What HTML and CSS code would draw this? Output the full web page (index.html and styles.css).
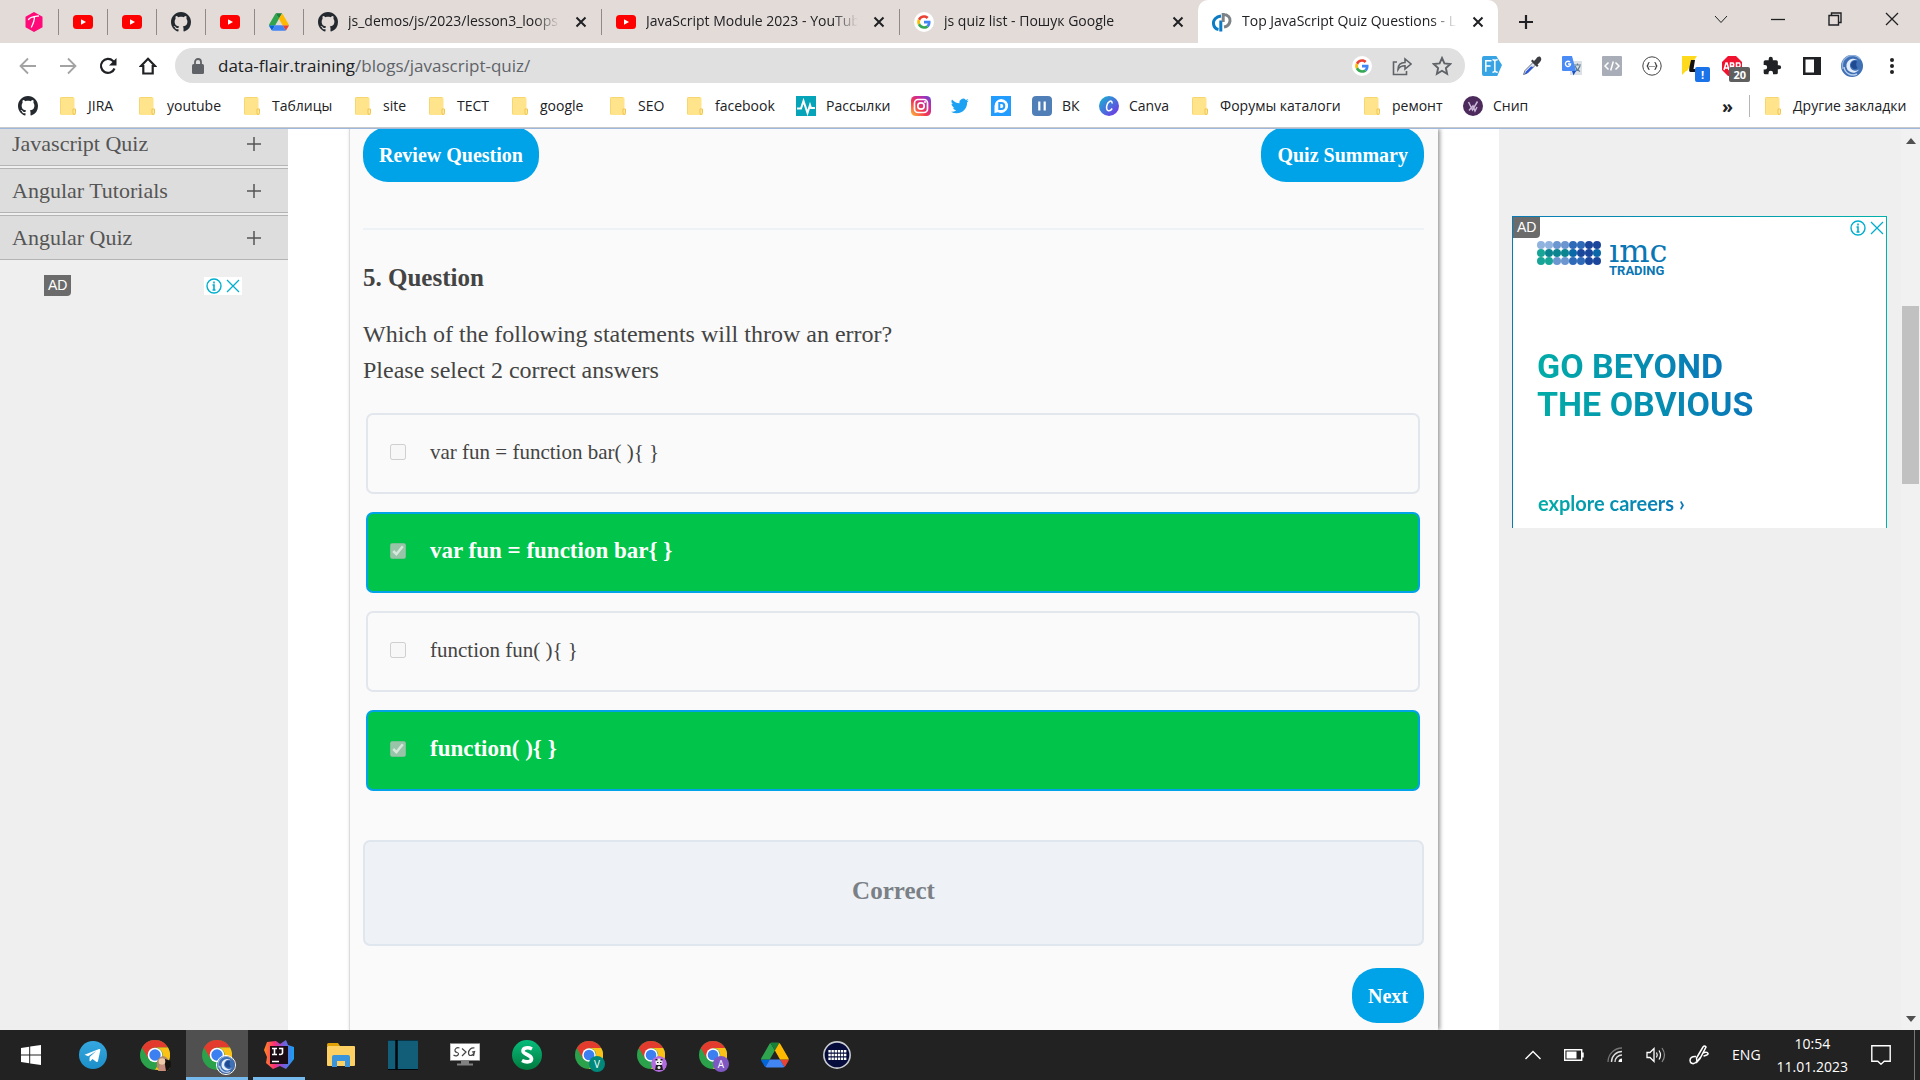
FILE: index.html
```html
<!DOCTYPE html>
<html lang="en">
<head>
<meta charset="utf-8">
<title>Top JavaScript Quiz Questions</title>
<link rel="stylesheet" href="styles.css">
</head>
<body>
<svg class="sprite" aria-hidden="true">
  <defs>
    <linearGradient id="g-insta" x1="0" y1="1" x2="1" y2="0"><stop offset="0" stop-color="#fdc33b"/><stop offset=".4" stop-color="#f3374f"/><stop offset=".7" stop-color="#c32aa3"/><stop offset="1" stop-color="#5a4bdc"/></linearGradient>
    <linearGradient id="g-canva" x1="0" y1="0" x2="1" y2="1"><stop offset="0" stop-color="#13b9cf"/><stop offset="1" stop-color="#7a2be8"/></linearGradient>
    <linearGradient id="g-ij" x1="0" y1="0" x2="1" y2="0"><stop offset="0" stop-color="#ff8a1f"/><stop offset=".35" stop-color="#fe2f77"/><stop offset=".6" stop-color="#8b4fd8"/><stop offset="1" stop-color="#12a5f4"/></linearGradient>
    <linearGradient id="g-s" x1="0" y1="0" x2="0" y2="1"><stop offset="0" stop-color="#06bd7d"/><stop offset="1" stop-color="#027a3d"/></linearGradient>
    <linearGradient id="g-tg" x1="0" y1="0" x2="0" y2="1"><stop offset="0" stop-color="#35a8e2"/><stop offset="1" stop-color="#1c8fc9"/></linearGradient>
  </defs>
  <symbol id="i-t" viewBox="0 0 20 20"><path fill="#ff0a78" d="M10 0l8.500 4.800v10.400L10 20l-8.500-4.800V4.800z"/><path d="M4.500 7.500c2.500-3 6-3 10-3.500M10.500 5c0 4-1.500 7-3 10" fill="none" stroke="#fff" stroke-width="1.300" stroke-linecap="round"/></symbol>
  <symbol id="i-yt" viewBox="0 0 20 20"><rect y="3" width="20" height="14" rx="3.500" fill="#f00"/><path d="M8 7.200v5.600L13 10z" fill="#fff"/></symbol>
  <symbol id="i-gh" viewBox="0 0 16 16"><path fill="#24292f" d="M8 0C3.580 0 0 3.580 0 8c0 3.540 2.290 6.530 5.470 7.590.4.070.55-.17.55-.38 0-.19-.01-.82-.01-1.490-2.010.37-2.530-.49-2.690-.94-.09-.23-.48-.94-.82-1.130-.28-.15-.68-.52-.01-.53.63-.01 1.080.58 1.230.82.72 1.210 1.870.87 2.330.66.070-.52.28-.87.51-1.070-1.780-.2-3.640-.89-3.640-3.950 0-.87.31-1.590.82-2.150-.08-.2-.36-1.020.08-2.120 0 0 .67-.21 2.200.82.64-.18 1.320-.27 2-.27s1.360.09 2 .27c1.530-1.040 2.200-.82 2.200-.82.44 1.100.16 1.920.08 2.120.51.56.82 1.270.82 2.150 0 3.070-1.870 3.750-3.650 3.950.29.25.54.73.54 1.480 0 1.070-.01 1.930-.01 2.200 0 .21.15.46.55.38A8.010 8.010 0 0016 8c0-4.420-3.580-8-8-8z"/></symbol>
  <symbol id="i-drive" viewBox="0 0 88 78"><path fill="#0066da" d="M6.600 66.850l3.850 6.650c.8 1.400 1.950 2.500 3.300 3.300L27.500 53H0c0 1.550.4 3.100 1.200 4.500z"/><path fill="#2fa44f" d="M43.650 25L29.900 1.200c-1.350.8-2.500 1.900-3.300 3.300L1.200 48.500A9 9 0 000 53h27.500z"/><path fill="#ea4335" d="M73.550 76.800c1.350-.8 2.500-1.900 3.300-3.300l9.250-16a9 9 0 001.200-4.500H59.800l5.850 11.500z"/><path fill="#188038" d="M43.650 25L57.400 1.200C56.050.4 54.500 0 52.900 0H34.400c-1.600 0-3.150.45-4.500 1.200z"/><path fill="#4285f4" d="M59.800 53H27.500L13.750 76.800c1.350.8 2.900 1.200 4.500 1.200h50.800c1.600 0 3.150-.45 4.500-1.200z"/><path fill="#ffba00" d="M73.400 26.500L60.700 4.500c-.8-1.400-1.950-2.500-3.300-3.300L43.650 25 59.800 53h27.450c0-1.550-.4-3.100-1.200-4.500z"/></symbol>
  <symbol id="i-google" viewBox="0 0 24 24"><circle cx="12" cy="12" r="12" fill="#fff"/><g transform="translate(3.800 3.800) scale(.342)"><path fill="#ea4335" d="M24 9.500c3.540 0 6.710 1.220 9.210 3.600l6.850-6.850C35.900 2.380 30.470 0 24 0 14.620 0 6.510 5.380 2.560 13.220l7.980 6.190C12.430 13.720 17.740 9.500 24 9.500z"/><path fill="#4285f4" d="M46.980 24.550c0-1.570-.15-3.090-.38-4.550H24v9.020h12.940c-.58 2.960-2.260 5.480-4.780 7.180l7.730 6c4.510-4.180 7.090-10.360 7.090-17.650z"/><path fill="#fbbc05" d="M10.530 28.590A14.500 14.500 0 019.770 24c0-1.600.27-3.140.76-4.590l-7.980-6.190A23.900 23.900 0 000 24c0 3.880.92 7.540 2.560 10.780z"/><path fill="#34a853" d="M24 48c6.480 0 11.930-2.130 15.890-5.810l-7.730-6c-2.150 1.450-4.920 2.300-8.160 2.300-6.260 0-11.570-4.220-13.470-9.910l-7.980 6.190C6.510 42.620 14.620 48 24 48z"/></g></symbol>
  <symbol id="i-df" viewBox="0 0 20 20"><path fill="none" stroke="#0b7cc4" stroke-width="3" d="M9 4C4 4.500 1 8 1.500 12c.4 3 2.500 5 5 5.500M8.800 8.500V19.500"/><path fill="none" stroke="#7d8287" stroke-width="3" d="M11.200 1v9M11 2.500c5 0 7.500 3 7 6.500s-3 5.500-6 6"/></symbol>
  <symbol id="i-x" viewBox="0 0 12 12"><path d="M1.500 1.500l9 9M10.500 1.500l-9 9" stroke="currentColor" stroke-width="2" fill="none"/></symbol>
  <symbol id="i-xthin" viewBox="0 0 14 14"><path d="M1 1l12 12M13 1L1 13" stroke="currentColor" stroke-width="1.300" fill="none"/></symbol>
  <symbol id="i-plus" viewBox="0 0 16 16"><path d="M8 1v14M1 8h14" stroke="currentColor" stroke-width="2.200"/></symbol>
  <symbol id="i-plusthin" viewBox="0 0 16 16"><path d="M8 1v14M1 8h14" stroke="currentColor" stroke-width="1.500"/></symbol>
  <symbol id="i-down" viewBox="0 0 14 14"><path d="M1 4l6 6.500L13 4" stroke="currentColor" fill="none"/></symbol>
  <symbol id="i-min" viewBox="0 0 14 14"><path d="M0 7.500h14" stroke="currentColor" stroke-width="1.300"/></symbol>
  <symbol id="i-restore" viewBox="0 0 14 14"><path d="M1 3.500h9.500V13H1zM3.500 3.500V1H13v9.500h-2.500" fill="none" stroke="currentColor" stroke-width="1.400"/></symbol>
  <symbol id="i-back" viewBox="0 0 18 18"><path d="M17 9H2M9 1.500L1.500 9 9 16.500" fill="none" stroke="currentColor" stroke-width="1.800"/></symbol>
  <symbol id="i-fwd" viewBox="0 0 18 18"><path d="M1 9h15M9 1.500L16.500 9 9 16.500" fill="none" stroke="currentColor" stroke-width="1.800"/></symbol>
  <symbol id="i-reload" viewBox="0 0 18 18"><path d="M15.500 11.500A7 7 0 1 1 14 4l2 2" fill="none" stroke="currentColor" stroke-width="2.200"/><path d="M17.500 1v7.500H10z" fill="currentColor"/></symbol>
  <symbol id="i-home" viewBox="0 0 18 18"><path d="M9 1.800L16 9h-2.300v7.500H4.300V9H2z" fill="none" stroke="currentColor" stroke-width="2.200"/></symbol>
  <symbol id="i-lock" viewBox="0 0 12 16"><rect y="6" width="12" height="10" rx="1.500" fill="#5f6368"/><path d="M3 7V4a3 3 0 016 0v3" fill="none" stroke="#5f6368" stroke-width="1.800"/></symbol>
  <symbol id="i-share" viewBox="0 0 20 20"><path d="M5 6H1.500v12.500h13V15M6 13.500c0-5 2.500-7 7-7V3l6 5-6 5v-3.200c-3.500 0-5.500 1-7 3.700z" fill="none" stroke="#5f6368" stroke-width="1.600"/></symbol>
  <symbol id="i-star" viewBox="0 0 20 20"><path d="M10 2l2.400 5.400 5.900.6-4.400 4 1.200 5.800L10 14.800l-5.100 3L6.100 12 1.700 8l5.900-.6z" fill="none" stroke="#5f6368" stroke-width="1.900"/></symbol>
  <symbol id="i-fi" viewBox="0 0 21 21"><path d="M2 0h13l6 9.500L16 21H2a2 2 0 01-2-2V2a2 2 0 012-2z" fill="#38a4e4"/><path d="M4 16.500V5h6M4 10.500h5M11 4c1.500 0 2.500.5 2.500 1.500v10c0 1-1 1.500-2.500 1.500M16.500 4c-2 0-3 .5-3 1.500M16.500 17c-2 0-3-.5-3-1.500" fill="none" stroke="#fff" stroke-width="1.500"/></symbol>
  <symbol id="i-dropper" viewBox="0 0 20 20"><path d="M11 6.500L3 14.500l-1.500 4 4-1.500 8-8z" fill="#dfe6f5" stroke="#6b7280"/><path d="M9 10.500l-5 5-1.500 3 3-1.500 6-6z" fill="#2757e0"/><path d="M9 5l6 6 1.500-1.500-1-1C18 6.500 20 4 19 2s-3-2-5 1l-2 2-1.500-1.500z" fill="#3b3d42"/></symbol>
  <symbol id="i-translate" viewBox="0 0 20 20"><rect x="8" y="5" width="12" height="14" fill="#dde0e4"/><path d="M12 9h7M15.500 7.500V9M13 10c1 3 3 4.500 5 5.500M18 10c-1 3-3 4.500-5 5.500" stroke="#5f7d95" stroke-width="1.200" fill="none"/><path d="M1 0h9l4 15H1a1 1 0 01-1-1V1a1 1 0 011-1z" fill="#4b8bf5"/><path d="M10 15h4l-2.500 4.500z" fill="#1a4fc4"/><path d="M8 6.200A2.600 2.600 0 108.600 8H6" stroke="#fff" stroke-width="1.300" fill="none"/></symbol>
  <symbol id="i-code" viewBox="0 0 20 20"><rect width="20" height="20" rx="1" fill="#a9adb8"/><path d="M6.500 6.500L3 10l3.500 3.500M13.500 6.500L17 10l-3.500 3.500M11.300 5.500l-2.600 9" stroke="#fff" stroke-width="1.500" fill="none"/></symbol>
  <symbol id="i-json" viewBox="0 0 20 20"><circle cx="10" cy="10" r="9.200" fill="#fff" stroke="#444"/><path d="M7.500 6.500c-2 0-1 2.700-2.200 3.500 1.200.8.200 3.500 2.200 3.500M12.500 6.500c2 0 1 2.700 2.200 3.500-1.200.8-.2 3.500-2.200 3.500M7.500 10.500h1M9.500 10.500h1M11.500 10.500h1" fill="none" stroke="#333" stroke-width="1.200"/></symbol>
  <symbol id="i-yellow" viewBox="0 0 20 20"><path d="M0 0h15L5 15H4L0 19z" fill="#ffd91c"/><path d="M9 4h4l-1.500 9h3l-.5 3H8.500C6 16 7.500 11 9 4z" fill="#111"/></symbol>
  <symbol id="i-abp" viewBox="0 0 20 20"><path d="M6 0h8l6 6v8l-6 6H6l-6-6V6z" fill="#f0122e"/><path d="M2 14l2-7h1l2 7M2.500 12h3.500M8.500 14V7h2.500q1.500 1.700 0 3.300H8.500h2.500q2 1.700 0 3.500H8.500M14.500 14V7h3q1.500 2 0 4h-3" stroke="#fff" stroke-width="1.500" fill="none"/></symbol>
  <symbol id="i-puzzle" viewBox="0 0 24 24"><path fill="#202124" d="M20.500 11H19V7a2 2 0 00-2-2h-4V3.500a2.500 2.500 0 00-5 0V5H4a2 2 0 00-2 2v3.800h1.500a2.700 2.700 0 010 5.400H2V20a2 2 0 002 2h3.800v-1.500a2.700 2.700 0 015.400 0V22H17a2 2 0 002-2v-4h1.500a2.500 2.500 0 000-5z"/></symbol>
  <symbol id="i-panel" viewBox="0 0 18 18"><path fill="#202124" d="M0 0h18v18H0zM2.500 2.500v13H11v-13z" fill-rule="evenodd"/></symbol>
  <symbol id="i-swirl" viewBox="0 0 22 22"><circle cx="11" cy="11" r="11" fill="#3f6fb5"/><path d="M2 14A10 10 0 0119 4" fill="none" stroke="#8fb0dd" stroke-width="1.500"/><path d="M17 5.500A7 7 0 1 0 18.500 14 5.500 5.500 0 1 1 17 5.500z" fill="#e4eefa"/><path d="M16 6.500a4 4 0 10.500 6.500A6 6 0 0116 6.500z" fill="#1f4a92"/><path d="M3 12a9 9 0 0013 7" fill="none" stroke="#b9cfec" stroke-width="1.500"/></symbol>
  <symbol id="i-dots" viewBox="0 0 4 18"><circle cx="2" cy="3" r="2" fill="#222"/><circle cx="2" cy="9" r="2" fill="#222"/><circle cx="2" cy="15" r="2" fill="#222"/></symbol>
  <symbol id="i-folder" viewBox="0 0 16 18"><path d="M1.500 0H13a1.500 1.500 0 011.500 1.500V12H16v4.500a1.500 1.500 0 01-1.500 1.500h-13A1.500 1.500 0 010 16.500v-15A1.500 1.500 0 011.500 0z" fill="#ffe48c"/><path d="M14.500 12h-1.500v4q0 2 1.500 1.500t1-5.500z" fill="#ffe9a0" stroke="#efc550"/><path d="M.5 17V1.500Q.5.500 1.500.5H13" fill="none" stroke="#f6d670"/></symbol>
  <symbol id="i-pulse" viewBox="0 0 20 20"><rect width="20" height="20" fill="#05a4b8"/><path d="M1 12.500h4L7.500 5l4 12 2.500-8 1 3h4" fill="none" stroke="#fff" stroke-width="2"/></symbol>
  <symbol id="i-insta" viewBox="0 0 20 20"><rect width="20" height="20" rx="4.500" fill="url(#g-insta)"/><rect x="3.500" y="3.500" width="13" height="13" rx="3.500" fill="none" stroke="#fff" stroke-width="1.700"/><circle cx="10" cy="10" r="3.200" fill="none" stroke="#fff" stroke-width="1.700"/><circle cx="14" cy="6" r="1" fill="#fff"/></symbol>
  <symbol id="i-twitter" viewBox="0 0 24 24"><path fill="#1da1f2" d="M23.600 4.600a10 10 0 01-2.800.8 4.900 4.900 0 002.100-2.700c-.9.600-2 1-3.100 1.200a4.900 4.900 0 00-8.400 4.500A14 14 0 011.400 3.200a4.900 4.900 0 001.500 6.500 4.900 4.900 0 01-2.200-.6c0 2.300 1.600 4.400 3.900 4.900a5 5 0 01-2.200.1 4.900 4.900 0 004.600 3.400A9.900 9.900 0 010 19.500 13.900 13.900 0 007.500 21.700c9.100 0 14-7.500 14-14v-.6a10 10 0 002.100-2.500z"/></symbol>
  <symbol id="i-d" viewBox="0 0 20 20"><rect width="20" height="20" fill="#239cff"/><path d="M10 3a7 7 0 11-3 13.300L3.500 17V10A7 7 0 0110 3z" fill="#fff"/><path d="M8.300 7h2a3 3 0 010 6h-2z" fill="none" stroke="#239cff" stroke-width="2"/></symbol>
  <symbol id="i-vk" viewBox="0 0 20 20"><rect width="20" height="20" rx="4" fill="#507fb8"/><path d="M7.300 5.500v9M12.700 5.500v9" stroke="#fff" stroke-width="2.200"/></symbol>
  <symbol id="i-canva" viewBox="0 0 20 20"><circle cx="10" cy="10" r="10" fill="url(#g-canva)"/><path d="M13 7.500c.5-2-1-3-2.500-2-3 1.500-4 8-1.500 9 1.700.6 3.200-.5 4.200-2" fill="none" stroke="#fff" stroke-width="1.500"/></symbol>
  <symbol id="i-snip" viewBox="0 0 20 20"><circle cx="10" cy="10" r="10" fill="#4c2a5c"/><path d="M5.500 6L9.500 14 14.500 5.500M6 14.500L10 10l2 5 2-4" fill="none" stroke="#cbb6d6" stroke-width="1.500"/></symbol>
  <symbol id="i-info" viewBox="0 0 16 16"><circle cx="8" cy="8" r="7" fill="none" stroke="#00aecd" stroke-width="1.400"/><path d="M8 3.500v2M6.500 7H8v5M6.500 12h3" stroke="#00aecd" stroke-width="1.600" fill="none"/></symbol>
  <symbol id="i-up" viewBox="0 0 10 6"><path d="M5 0l5 6H0z" fill="#505050"/></symbol>
  <symbol id="i-dn" viewBox="0 0 10 6"><path d="M0 0h10L5 6z" fill="#505050"/></symbol>
  <symbol id="i-win" viewBox="0 0 20 20"><path fill="#fff" d="M0 3l8.200-1.200v7.700H0zM9.200 1.600L20 0v9.500H9.200zM0 10.500h8.200v7.700L0 17zM9.200 10.500H20V20L9.200 18.400z"/></symbol>
  <symbol id="i-tg" viewBox="0 0 28 28"><circle cx="14" cy="14" r="14" fill="url(#g-tg)"/><path d="M5.500 13.800L20 8c1-.3 1.500.2 1.300 1.300L19 20c-.2 1-1 1.200-1.800.7L13.500 18l-2 2c-.6.5-1 .3-1-.5l.2-3.500 6.500-6-8 5.200z" fill="#fff"/></symbol>
  <symbol id="i-chrome" viewBox="0 0 30 30"><circle cx="15" cy="15" r="15" fill="#2aa14a"/><path d="M2 7.500A15 15 0 0128 7.500H15a7.500 7.500 0 00-7 5z" fill="#e33b2e"/><path d="M28 7.500A15 15 0 0115 30l6.500-11A7.500 7.500 0 0015 7.500z" fill="#fbc116"/><path d="M2 7.500L8.500 18.700 15 7.500z" fill="#e33b2e"/><circle cx="15" cy="15" r="7.300" fill="#fff"/><circle cx="15" cy="15" r="5.700" fill="#3b7ff0"/></symbol>
  <symbol id="i-ij" viewBox="0 0 30 30"><path d="M3 2l9-1 4 3 6-4 2 5 6 2v12l-3 4-5 6-6-3-7 3-7-6 1-6-3-7z" fill="url(#g-ij)"/><rect x="6" y="6" width="18" height="18" fill="#1b0b14"/><path d="M8 8.500h5M10.500 8.500v6M8 14.500h5M15 8.500h3.500v4.500q-.5 2-3.500 1.300M8 21.500h7" fill="none" stroke="#fff" stroke-width="1.600"/></symbol>
  <symbol id="i-files" viewBox="0 0 28 24"><path d="M0 1.500Q0 0 1.500 0H11l2 3H0z" fill="#e0a106"/><rect y="3" width="28" height="20" rx="1" fill="#fdd063"/><path d="M5 24V14q0-2 2-2h14q2 0 2 2v10h-5v-6h-8v6z" fill="#3a94dc"/></symbol>
  <symbol id="i-book" viewBox="0 0 30 30"><rect width="30" height="30" fill="#125e78"/><path d="M0 0h30M0 29.500h30" stroke="#02070c"/><path d="M8.500 0v30" stroke="#02070c" stroke-width="2.500"/></symbol>
  <symbol id="i-sg" viewBox="0 0 30 23"><rect width="30" height="17" fill="#fff" stroke="#888"/><path d="M11 17h8v3h4v2H7v-2h4z" fill="#808080"/><path d="M9.500 4.500c-3-1-5 1-4.500 3s4 1 3.500 3-3 2.500-5 1M12 5l4 3.500-4 4M24.500 4.500c-3-1-6 2-6 5s4 4 6-1h-2.500l2.500-.5-1 4.500" fill="none" stroke="#444" stroke-width="1.200"/></symbol>
  <symbol id="i-s" viewBox="0 0 30 30"><circle cx="15" cy="15" r="15" fill="url(#g-s)"/><path d="M20 9c-4-2-9-1.500-9 2s8 3.500 8.500 7.500-5.500 4-9.500 2" fill="none" stroke="#fff" stroke-width="3.600"/></symbol>
  <symbol id="i-grid" viewBox="0 0 26 26"><circle cx="13" cy="13" r="12.200" fill="#050b3a" stroke="#c9ccd2" stroke-width="1.500"/><path d="M5 9.500h17M5 13h17M5 16.500h17" stroke="#fff" stroke-width="2.200" stroke-dasharray="2.200 .7"/></symbol>
  <symbol id="i-person" viewBox="0 0 16 16"><path d="M3 15Q0 6 4 2t8 0l3 4v9z" fill="#b08a6b"/><path d="M10 3l6 2v9l-6 2z" fill="#15130f"/><circle cx="7" cy="5.500" r="3.300" fill="#f0c9a8"/><path d="M5 9h5l1 6H3z" fill="#c78d7e"/><path d="M0 13l3-1 1 4H0z" fill="#f2c511"/></symbol>
  <symbol id="i-panda" viewBox="0 0 16 16"><circle cx="8" cy="8" r="8" fill="#b36be0"/><circle cx="8" cy="6" r="3.500" fill="#eee"/><path d="M5 9h6l1 5H4zM4.500 3h2v1.500h-2zM9.500 3h2v1.500h-2zM6 6h1.500v1H6zM9 6h1.500v1H9z" fill="#1c1c1c"/><circle cx="8" cy="11.500" r="1.500" fill="#eee"/></symbol>
  <symbol id="i-trayup" viewBox="0 0 16 16"><path d="M.5 12L8 4.500l7.500 7.500" stroke="#fff" stroke-width="1.400" fill="none"/></symbol>
  <symbol id="i-batt" viewBox="0 0 20 12"><path d="M.7.700h17v10.600H.7zM19 3.500v5" stroke="#fff" stroke-width="1.400" fill="none"/><path d="M2.500 2.500h10v7h-10z" fill="#fff"/></symbol>
  <symbol id="i-wifi" viewBox="0 0 16 16"><path d="M1 15A14 14 0 0115 1" stroke="#777" stroke-width="1.300" fill="none"/><path d="M4.500 15A10.500 10.500 0 0115 4.500M8 15a7 7 0 017-7" stroke="#ddd" stroke-width="1.400" fill="none"/><path d="M11.500 15a3.500 3.500 0 013.500-3.500V15z" fill="#fff"/></symbol>
  <symbol id="i-vol" viewBox="0 0 20 18"><path d="M1 6.500h3l4-4v13l-4-4H1z" fill="none" stroke="#fff" stroke-width="1.300"/><path d="M10.500 6.500q1.500 2.500 0 5M13 4.500q3 4.500 0 9" fill="none" stroke="#fff" stroke-width="1.200"/><path d="M16 2q5 7 0 14" fill="none" stroke="#888" stroke-width="1.200"/></symbol>
  <symbol id="i-pen" viewBox="0 0 20 20"><path d="M8 17L7.500 13 14 2q1.500-2 3 0l-6 11.500zM14 8c2-1 4.500-1 5 .5s-3 2-4.500 2.500M7 11.500c-4-.5-6 1.500-6 4s3 4 5 2.500 4-3 5-5.500" fill="none" stroke="#fff" stroke-width="1.500"/></symbol>
  <symbol id="i-note" viewBox="0 0 20 20"><path d="M.8.800h18.400v15.400h-6L10 19.200l-3.200-3H.8z" fill="none" stroke="#fff" stroke-width="1.400"/></symbol>
</svg>

<header class="browser">
  <div class="tabstrip">
    <button class="pin" aria-label="T"><svg class="ic20"><use href="#i-t"/></svg></button>
    <button class="pin" aria-label="YouTube"><svg class="ic20"><use href="#i-yt"/></svg></button>
    <button class="pin" aria-label="YouTube"><svg class="ic20"><use href="#i-yt"/></svg></button>
    <button class="pin" aria-label="GitHub"><svg class="ic20"><use href="#i-gh"/></svg></button>
    <button class="pin" aria-label="YouTube"><svg class="ic20"><use href="#i-yt"/></svg></button>
    <button class="pin" aria-label="Drive"><svg class="ic20"><use href="#i-drive"/></svg></button>
    <div class="tab"><svg class="ic20"><use href="#i-gh"/></svg><span class="tab-title">js_demos/js/2023/lesson3_loops at</span><button class="close" aria-label="Close"><svg class="ic12"><use href="#i-x"/></svg></button></div>
    <div class="tab"><svg class="ic20"><use href="#i-yt"/></svg><span class="tab-title">JavaScript Module 2023 - YouTube</span><button class="close" aria-label="Close"><svg class="ic12"><use href="#i-x"/></svg></button></div>
    <div class="tab last"><svg class="ic20"><use href="#i-google"/></svg><span class="tab-title">js quiz list - Пошук Google</span><button class="close" aria-label="Close"><svg class="ic12"><use href="#i-x"/></svg></button></div>
    <div class="tab active"><svg class="ic20"><use href="#i-df"/></svg><span class="tab-title">Top JavaScript Quiz Questions - Learn</span><button class="close" aria-label="Close"><svg class="ic12"><use href="#i-x"/></svg></button></div>
    <button class="newtab" aria-label="New tab"><svg class="ic16"><use href="#i-plus"/></svg></button>
    <div class="wincontrols">
      <button aria-label="Search tabs"><svg class="ic14"><use href="#i-down"/></svg></button>
      <button aria-label="Minimize"><svg class="ic14"><use href="#i-min"/></svg></button>
      <button aria-label="Restore"><svg class="ic14"><use href="#i-restore"/></svg></button>
      <button aria-label="Close window"><svg class="ic14"><use href="#i-xthin"/></svg></button>
    </div>
  </div>

  <div class="toolbar">
    <button class="tool dim" aria-label="Back"><svg class="ic18"><use href="#i-back"/></svg></button>
    <button class="tool dim" aria-label="Forward"><svg class="ic18"><use href="#i-fwd"/></svg></button>
    <button class="tool" aria-label="Reload"><svg class="ic18"><use href="#i-reload"/></svg></button>
    <button class="tool" aria-label="Home"><svg class="ic18"><use href="#i-home"/></svg></button>
    <div class="omnibox">
      <svg class="lock"><use href="#i-lock"/></svg>
      <a class="url" href="#">data-flair.training<span>/blogs/javascript-quiz/</span></a>
      <button class="tool" aria-label="Google"><svg class="ic20"><use href="#i-google"/></svg></button>
      <button class="tool" aria-label="Share"><svg class="ic20"><use href="#i-share"/></svg></button>
      <button class="tool" aria-label="Bookmark"><svg class="ic20"><use href="#i-star"/></svg></button>
    </div>
    <button class="tool" aria-label="FI"><svg class="ic20"><use href="#i-fi"/></svg></button>
    <button class="tool" aria-label="Color picker"><svg class="ic20"><use href="#i-dropper"/></svg></button>
    <button class="tool" aria-label="Translate"><svg class="ic20"><use href="#i-translate"/></svg></button>
    <button class="tool" aria-label="Code"><svg class="ic20"><use href="#i-code"/></svg></button>
    <button class="tool" aria-label="JSON"><svg class="ic20"><use href="#i-json"/></svg></button>
    <button class="tool"><svg class="ic20"><use href="#i-yellow"/></svg><span class="badge alert">!</span></button>
    <button class="tool"><svg class="ic20"><use href="#i-abp"/></svg><span class="badge">20</span></button>
    <button class="tool" aria-label="Extensions"><svg class="ic20"><use href="#i-puzzle"/></svg></button>
    <button class="tool" aria-label="Side panel"><svg class="ic18"><use href="#i-panel"/></svg></button>
    <button class="tool" aria-label="Profile"><svg class="ic22"><use href="#i-swirl"/></svg></button>
    <button class="tool" aria-label="Menu"><svg class="menu"><use href="#i-dots"/></svg></button>
  </div>

  <nav class="bookmarks">
    <a href="#" aria-label="GitHub"><svg class="ic20"><use href="#i-gh"/></svg></a>
    <a href="#"><svg class="folder"><use href="#i-folder"/></svg>JIRA</a>
    <a href="#"><svg class="folder"><use href="#i-folder"/></svg>youtube</a>
    <a href="#"><svg class="folder"><use href="#i-folder"/></svg>Таблицы</a>
    <a href="#"><svg class="folder"><use href="#i-folder"/></svg>site</a>
    <a href="#"><svg class="folder"><use href="#i-folder"/></svg>ТЕСТ</a>
    <a href="#"><svg class="folder"><use href="#i-folder"/></svg>google</a>
    <a href="#"><svg class="folder"><use href="#i-folder"/></svg>SEO</a>
    <a href="#"><svg class="folder"><use href="#i-folder"/></svg>facebook</a>
    <a href="#" class="site"><svg class="ic20"><use href="#i-pulse"/></svg>Рассылки</a>
    <a href="#" aria-label="Instagram"><svg class="ic20"><use href="#i-insta"/></svg></a>
    <a href="#" aria-label="Twitter"><svg class="ic18"><use href="#i-twitter"/></svg></a>
    <a href="#" aria-label="D"><svg class="ic20"><use href="#i-d"/></svg></a>
    <a href="#" class="site"><svg class="ic20"><use href="#i-vk"/></svg>ВК</a>
    <a href="#" class="site"><svg class="ic20"><use href="#i-canva"/></svg>Canva</a>
    <a href="#"><svg class="folder"><use href="#i-folder"/></svg>Форумы каталоги</a>
    <a href="#"><svg class="folder"><use href="#i-folder"/></svg>ремонт</a>
    <a href="#" class="site"><svg class="ic20"><use href="#i-snip"/></svg>Снип</a>
    <button class="more" aria-label="More bookmarks">»</button>
    <a href="#" class="other"><svg class="folder"><use href="#i-folder"/></svg>Другие закладки</a>
  </nav>
</header>

<div class="page">
  <aside class="sidebar">
    <ul class="topics">
      <li><a href="#">Javascript Quiz<svg class="ic16"><use href="#i-plusthin"/></svg></a></li>
      <li><a href="#">Angular Tutorials<svg class="ic16"><use href="#i-plusthin"/></svg></a></li>
      <li><a href="#">Angular Quiz<svg class="ic16"><use href="#i-plusthin"/></svg></a></li>
    </ul>
    <div class="side-ad">
      <span class="ad-tag">AD</span>
      <span class="ad-choices"><svg class="ic16"><use href="#i-info"/></svg><svg class="ic14"><use href="#i-xthin"/></svg></span>
    </div>
  </aside>

  <main class="content">
    <article class="quiz">
      <div class="quiz-nav">
        <button class="pill">Review Question</button>
        <button class="pill">Quiz Summary</button>
      </div>
      <hr>
      <h1>5. Question</h1>
      <p class="prompt">Which of the following statements will throw an error?<br>Please select 2 correct answers</p>
      <ul class="answers">
        <li><label class="answer"><input type="checkbox" disabled>var fun = function bar( ){ }</label></li>
        <li><label class="answer correct"><input type="checkbox" checked disabled>var fun = function bar{ }</label></li>
        <li><label class="answer"><input type="checkbox" disabled>function fun( ){ }</label></li>
        <li><label class="answer correct"><input type="checkbox" checked disabled>function( ){ }</label></li>
      </ul>
      <p class="result">Correct</p>
      <div class="next-row"><button class="pill">Next</button></div>
    </article>
  </main>

  <aside class="ads">
    <section class="banner">
      <div class="banner-top">
        <span class="ad-tag">AD</span>
        <span class="ad-choices"><svg class="ic16"><use href="#i-info"/></svg><svg class="ic14"><use href="#i-xthin"/></svg></span>
      </div>
      <div class="brand">
        <svg class="brand-dots" viewBox="0 0 64 24">
          <g fill="#8fb2df"><circle cx="4" cy="4" r="4"/><circle cx="12" cy="4" r="4"/></g><g fill="#6b96cf"><circle cx="20" cy="4" r="4"/><circle cx="28" cy="4" r="4"/><circle cx="20" cy="20" r="4"/><circle cx="28" cy="20" r="4"/></g><g fill="#2f6ab8"><circle cx="36" cy="4" r="4"/><circle cx="44" cy="4" r="4"/><circle cx="36" cy="20" r="4"/><circle cx="44" cy="20" r="4"/></g><g fill="#1a469b"><circle cx="52" cy="4" r="4"/><circle cx="60" cy="4" r="4"/><circle cx="52" cy="20" r="4"/><circle cx="60" cy="20" r="4"/><circle cx="44" cy="12" r="4"/><circle cx="52" cy="12" r="4"/></g><g fill="#17a597"><circle cx="4" cy="20" r="4"/><circle cx="12" cy="20" r="4"/><circle cx="4" cy="12" r="4"/></g><g fill="#0a8590"><circle cx="12" cy="12" r="4"/><circle cx="20" cy="12" r="4"/><circle cx="28" cy="12" r="4"/></g><g fill="#0a68a8"><circle cx="36" cy="12" r="4"/><circle cx="60" cy="12" r="4"/></g>
        </svg>
        <div class="brand-name"><b>ımc</b><span>TRADING</span></div>
      </div>
      <h2><span>GO BEYOND</span><br><span>THE OBVIOUS</span></h2>
      <a class="careers" href="#">explore careers ›</a>
    </section>
  </aside>

  <div class="scrollbar">
    <svg class="arrow"><use href="#i-up"/></svg>
    <div class="track"><div class="thumb"></div></div>
    <svg class="arrow"><use href="#i-dn"/></svg>
  </div>
</div>

<footer class="taskbar">
  <button aria-label="Start"><svg class="ic20"><use href="#i-win"/></svg></button>
  <button aria-label="Telegram"><svg class="ic28"><use href="#i-tg"/></svg></button>
  <button aria-label="Chrome"><svg class="ic30"><use href="#i-chrome"/></svg><svg class="profile"><use href="#i-person"/></svg></button>
  <button class="running current" aria-label="Chrome"><svg class="ic30"><use href="#i-chrome"/></svg><svg class="profile big"><use href="#i-swirl"/></svg></button>
  <button class="running" aria-label="IntelliJ"><svg class="ic30"><use href="#i-ij"/></svg></button>
  <button aria-label="Files"><svg class="ic28"><use href="#i-files"/></svg></button>
  <button aria-label="Book"><svg class="ic30"><use href="#i-book"/></svg></button>
  <button aria-label="ScreenToGif"><svg class="ic30"><use href="#i-sg"/></svg></button>
  <button aria-label="S"><svg class="ic30"><use href="#i-s"/></svg></button>
  <button><svg class="ic28"><use href="#i-chrome"/></svg><span class="profile teal">V</span></button>
  <button aria-label="Chrome"><svg class="ic28"><use href="#i-chrome"/></svg><svg class="profile"><use href="#i-panda"/></svg></button>
  <button><svg class="ic28"><use href="#i-chrome"/></svg><span class="profile violet">A</span></button>
  <button aria-label="Drive"><svg class="ic28"><use href="#i-drive"/></svg></button>
  <button aria-label="Grid"><svg class="ic28"><use href="#i-grid"/></svg></button>
  <div class="tray">
    <svg class="ic16"><use href="#i-trayup"/></svg>
    <svg class="ic20"><use href="#i-batt"/></svg>
    <svg class="ic16"><use href="#i-wifi"/></svg>
    <svg class="ic20"><use href="#i-vol"/></svg>
    <svg class="ic20"><use href="#i-pen"/></svg>
    <div class="clock"><span>ENG</span><time>10:54<br>11.01.2023</time></div>
    <svg class="ic20"><use href="#i-note"/></svg>
    <i class="desk"></i>
  </div>
</footer>
</body>
</html>
```

FILE: styles.css
```css
* { box-sizing: border-box; }
body {
  margin: 0;
  height: 100vh;
  display: flex;
  flex-direction: column;
  overflow: hidden;
  font: 14px/20px "Open Sans", "Noto Sans", sans-serif;
  color: #202124;
  background: #fff;
}
button { border: 0; padding: 0; background: none; font: inherit; color: inherit; }
a { color: inherit; text-decoration: none; }
ul { list-style: none; margin: 0; padding: 0; }
svg { display: block; flex: none; }
.sprite { position: absolute; width: 0; height: 0; }
.ic12 { width: 12px; height: 12px; }
.ic14 { width: 14px; height: 14px; }
.ic16 { width: 16px; height: 16px; }
.ic18 { width: 18px; height: 18px; }
.ic20 { width: 20px; height: 20px; }
.ic22 { width: 22px; height: 22px; }
.ic28 { width: 28px; height: 28px; }
.ic30 { width: 30px; height: 30px; }

/* Tabs */
.tabstrip { display: flex; align-items: center; height: 43px; padding-left: 10px; background: #e3dbd8; }
.pin { display: flex; justify-content: center; align-items: center; width: 49px; height: 26px; border-right: 1px solid #8f8a88; }
.tab { display: flex; align-items: center; flex: 0 1 298px; min-width: 0; height: 26px; padding: 0 14px; border-right: 1px solid #8f8a88; }
.tab.last { border-right: 0; }
.tab.active { height: 43px; flex-basis: 300px; border: 0; border-radius: 10px 10px 0 0; background: #fff; }
.tab-title {
  flex: 1;
  min-width: 0;
  margin: 0 15px 0 10px;
  padding-bottom: 2px;
  overflow: hidden;
  white-space: nowrap;
  mask-image: linear-gradient(to right, #000 88%, transparent);
}
.newtab { margin-left: 20px; }
.wincontrols { display: flex; align-self: flex-start; margin-left: auto; }
.wincontrols button { display: flex; justify-content: center; align-items: center; width: 57px; height: 38px; }

/* Toolbar */
.toolbar { display: flex; align-items: center; height: 45px; padding: 0 8px; }
.tool { position: relative; display: flex; justify-content: center; align-items: center; width: 40px; height: 35px; }
.dim { color: #a3a3a3; }
.omnibox { display: flex; align-items: center; flex: 1; height: 35px; margin: 0 7px; padding: 0 3px 0 17px; border-radius: 18px; background: #e0e0e0; }
.lock { width: 12px; height: 16px; margin-right: 14px; }
.url { flex: 1; font-size: 17px; line-height: 24px; }
.url span { color: #5f6368; }
.menu { width: 4px; height: 18px; }
.badge { position: absolute; right: 2px; bottom: 1px; min-width: 15px; padding: 0 4px; border-radius: 2px; background: #5f5f5f; color: #fff; font-size: 11px; line-height: 15px; font-weight: 700; }
.badge.alert { background: #1a73e8; }

/* Bookmarks */
.bookmarks {
  display: grid;
  grid-template-columns: 42px 79px 105px 111px 74px 83px 98px 77px 109px 115px 40px 40px 41px 67px 93px 172px 99px 1fr 27px 158px;
  align-items: center;
  height: 40px;
  padding: 0 13px 4px 18px;
  border-bottom: 1px solid #c9c9c9;
  white-space: nowrap;
}
.bookmarks a { display: flex; align-items: center; gap: 12px; }
.bookmarks a.site { gap: 10px; }
.folder { width: 16px; height: 22px; }
.more { font-size: 18px; font-weight: 700; text-align: left; }
.bookmarks a.other { height: 22px; padding-left: 15px; border-left: 1px solid #b5b5b5; }

/* Page */
.page { display: flex; flex: 1; min-height: 0; overflow: hidden; border-top: 1px solid #9db8dc; font-family: "Liberation Serif", serif; color: #444; }
.sidebar { flex: 0 0 288px; background: #efefef; }
.topics { display: flex; flex-direction: column; gap: 2px; margin-top: -8px; }
.topics a { display: flex; justify-content: space-between; align-items: center; height: 45px; padding: 0 26px 0 12px; border: solid #b4b4b4; border-width: 1px 0; background: #ddd; color: #555; font-size: 22px; line-height: 24px; }
.side-ad { display: flex; justify-content: space-between; align-items: center; padding: 15px 46px 0 44px; }
.ad-tag { padding: 0 4px; border-radius: 0 0 4px 0; background: #6b6b6b; color: #fff; font: 14px/21px "Liberation Sans", sans-serif; }
.ad-choices { display: flex; align-items: center; gap: 4px; padding: 1px 2px; background: #fff; color: #00aecd; }

.content { flex: 1; padding: 0 61px; background: #fff; }
.quiz { display: flow-root; height: 100%; padding: 0 14px 0 13px; border-left: 1px solid #dcdcdc; background: #fafafa; box-shadow: 2px 0 4px rgba(0, 0, 0, .4); }
.quiz-nav { display: flex; justify-content: space-between; margin-top: -2px; }
.pill { height: 55px; padding: 0 16px; border-radius: 25px; background: #00a2e8; color: #fff; font-size: 20px; line-height: 24px; font-weight: 700; }
.quiz hr { height: 2px; margin: 46px 0 34px; border: 0; background: #edf2f6; }
.quiz h1 { margin: 0; font-size: 25px; line-height: 28px; }
.prompt { margin: 24px 0 25px; font-size: 24px; line-height: 36px; }
.answers { display: flex; flex-direction: column; gap: 18px; padding: 0 4px 0 3px; }
.answer { display: flex; align-items: center; gap: 24px; height: 81px; padding: 0 22px 4px; border: 2px solid #e2e6ed; border-radius: 7px; font-size: 21px; line-height: 28px; }
.answer input { width: 16px; height: 16px; margin: 0; }
.answer.correct { border-color: #00a2e8; background: #00c54a; color: #fff; font-size: 23px; font-weight: 700; }
.result { margin: 49px 0 22px; padding: 36px 0 40px; border: 2px solid #e0e6ed; border-radius: 7px; background: #eef2f6; color: #7a8085; font-size: 25px; line-height: 26px; font-weight: 700; text-align: center; }
.next-row { display: flex; justify-content: flex-end; }

/* Banner */
.ads { flex: 0 0 402px; padding: 87px 14px 0 13px; background: #efefef; }
.banner { height: 312px; border: 1px solid; border-bottom: 0; border-image: linear-gradient(to right, #0a7ab5, #00b2a9) 1; background: #fff; }
.banner-top { display: flex; justify-content: space-between; }
.brand { display: flex; gap: 8px; padding: 2px 24px 0; }
.brand-dots { width: 64px; height: 24px; margin-top: 1px; }
.brand-name { display: grid; color: #0a76b4; }
.brand-name b { font: 32px/22px "DejaVu Serif", serif; }
.brand-name span { padding-top: 2px; font: 700 13px/14px Roboto, sans-serif; }
.banner h2 { margin: 69px 24px 0; font: 700 34px/38px Roboto, sans-serif; }
.banner h2 span, .careers { background: linear-gradient(to right, #00ada7, #0a76b9); background-clip: text; color: transparent; }
.careers { display: inline-block; margin: 68px 25px 0; font: 700 20px/24px Lato, sans-serif; }

.scrollbar { display: flex; flex-direction: column; align-items: center; flex: 0 0 19px; padding: 9px 0 8px; background: #f1f1f1; }
.arrow { width: 10px; height: 6px; }
.track { flex: 1; width: 17px; padding-top: 162px; }
.thumb { height: 178px; background: #c1c1c1; }

/* Taskbar */
.taskbar { display: flex; height: 50px; background: #222; color: #fff; }
.taskbar button { position: relative; display: flex; justify-content: center; align-items: center; width: 62px; height: 50px; }
.taskbar .running { background: linear-gradient(#76b9ed, #76b9ed) bottom / 52px 3px no-repeat; }
.taskbar .current { background-color: #505050; background-size: 100% 3px; }
.profile { position: absolute; right: 15px; bottom: 8px; width: 16px; height: 16px; border-radius: 50%; font-size: 10px; line-height: 16px; text-align: center; }
.profile.big { width: 20px; height: 20px; right: 12px; bottom: 5px; border: 1px solid #fff; }
.teal { background: #00897b; }
.violet { background: #7e57c2; }
.tray { display: flex; align-items: center; gap: 23px; margin-left: auto; padding-right: 5px; }
.clock { display: flex; align-items: center; gap: 16px; }
.clock time { line-height: 23px; text-align: center; }
.desk { width: 1px; height: 50px; background: #777; }
```
